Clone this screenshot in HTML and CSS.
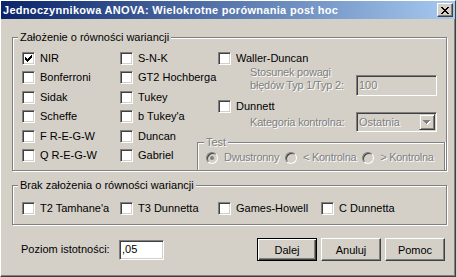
FILE: index.html
```html
<!DOCTYPE html>
<html lang="pl">
<head>
    <meta charset="UTF-8">
    <title>Jednoczynnikowa ANOVA: Wielokrotne porównania post hoc</title>
    <link rel="stylesheet" href="styles.css">
</head>
<body>
    <div class="window">
        <div class="titlebar">
            <span class="title">Jednoczynnikowa ANOVA: Wielokrotne porównania post hoc</span>
            <span class="close">
                <svg width="8" height="7" viewBox="0 0 8 7" shape-rendering="crispEdges"><path fill="#000" d="M0 0h2v1h-2zM6 0h2v1h-2zM1 1h2v1h-2zM5 1h2v1h-2zM2 2h4v1h-4zM3 3h2v1h-2zM2 4h4v1h-4zM1 5h2v1h-2zM5 5h2v1h-2zM0 6h2v1h-2zM6 6h2v1h-2z"/></svg>
            </span>
        </div>

        <div class="content">
            <!-- equal variances assumed -->
            <div class="group group-equal">
                <div class="group-label">Założenie o równości wariancji</div>
                <div class="cols">
                    <div class="checks">
                        <label class="check"><span class="box"><svg width="7" height="7" viewBox="0 0 7 7" shape-rendering="crispEdges"><path fill="#000" d="M6 0h1v1h-1zM5 1h2v1h-2zM0 2h1v1h-1zM4 2h3v1h-3zM0 3h2v1h-2zM3 3h3v1h-3zM0 4h5v1h-5zM1 5h3v1h-3zM2 6h1v1h-1z"/></svg></span>NIR</label>
                        <label class="check"><span class="box"></span>Bonferroni</label>
                        <label class="check"><span class="box"></span>Sidak</label>
                        <label class="check"><span class="box"></span>Scheffe</label>
                        <label class="check"><span class="box"></span>F R-E-G-W</label>
                        <label class="check"><span class="box"></span>Q R-E-G-W</label>
                    </div>
                    <div class="checks">
                        <label class="check"><span class="box"></span>S-N-K</label>
                        <label class="check"><span class="box"></span>GT2 Hochberga</label>
                        <label class="check"><span class="box"></span>Tukey</label>
                        <label class="check"><span class="box"></span>b Tukey'a</label>
                        <label class="check"><span class="box"></span>Duncan</label>
                        <label class="check"><span class="box"></span>Gabriel</label>
                    </div>
                    <div class="col-wide">
                        <label class="check"><span class="box"></span>Waller-Duncan</label>
                        <div class="field-row">
                            <span class="field-label disabled">Stosunek powagi<br>błędów Typ 1/Typ 2:</span>
                            <span class="edit edit-ratio disabled">100</span>
                        </div>
                        <label class="check check-dunnett"><span class="box"></span>Dunnett</label>
                        <div class="field-row field-row-combo">
                            <span class="field-label disabled">Kategoria kontrolna:</span>
                            <span class="combo">
                                <span class="combo-text disabled">Ostatnia</span>
                                <span class="combo-btn">
                                    <svg width="8" height="5" viewBox="0 0 8 5" shape-rendering="crispEdges"><path fill="#fff" d="M1 1h7v1h-7zM2 2h5v1h-5zM3 3h3v1h-3zM4 4h1v1h-1z"/><path fill="#808080" d="M0 0h7v1h-7zM1 1h5v1h-5zM2 2h3v1h-3zM3 3h1v1h-1z"/></svg>
                                </span>
                            </span>
                        </div>
                        <div class="test-box">
                            <div class="group-label disabled">Test</div>
                            <div class="radios">
                                <span class="radio-item disabled"><span class="radio"><span class="dot"></span></span>Dwustronny</span>
                                <span class="radio-item disabled"><span class="radio"></span>&lt; Kontrolna</span>
                                <span class="radio-item disabled"><span class="radio"></span>&gt; Kontrolna</span>
                            </div>
                        </div>
                    </div>
                </div>
            </div>

            <!-- equal variances not assumed -->
            <div class="group group-unequal">
                <div class="group-label">Brak założenia o równości wariancji</div>
                <div class="row-checks">
                    <label class="check"><span class="box"></span>T2 Tamhane'a</label>
                    <label class="check"><span class="box"></span>T3 Dunnetta</label>
                    <label class="check"><span class="box"></span>Games-Howell</label>
                    <label class="check"><span class="box"></span>C Dunnetta</label>
                </div>
            </div>

            <div class="bottom-row">
                <span class="alpha-label">Poziom istotności:</span>
                <span class="edit edit-alpha">,05</span>
                <div class="buttons">
                    <button class="button default">Dalej</button>
                    <button class="button">Anuluj</button>
                    <button class="button">Pomoc</button>
                </div>
            </div>
        </div>
    </div>
</body>
</html>
```
FILE: styles.css
```css
body {
    margin: 0;
    background-color: #d4d0c8;
    font-family: "Liberation Sans", Arial, sans-serif;
    font-size: 11px;
    line-height: 13px;
    color: #000;
}
.window {
    width: 456px;
    height: 277px;
    box-sizing: border-box;
    border-left: 1px solid #fff;
    border-top: 1px solid #fff;
    border-right: 1px solid #404040;
    border-bottom: 1px solid #404040;
    box-shadow: inset -1px -1px #808080;
    background-color: #d4d0c8;
}
.titlebar {
    display: flex;
    align-items: center;
    height: 18px;
    padding: 0 2px;
    background: linear-gradient(to right, #0a246a, #a6caf0);
}
.title {
    flex: 1;
    color: #fff;
    font-weight: bold;
    letter-spacing: .3px;
    white-space: nowrap;
}
.close {
    display: flex;
    align-items: center;
    justify-content: center;
    width: 16px;
    height: 14px;
    box-sizing: border-box;
    border: 1px solid;
    border-color: #fff #404040 #404040 #fff;
    box-shadow: inset -1px -1px #808080;
    background-color: #d4d0c8;
}
.content {
    padding: 18px 0 0 11px;
}

/* group boxes */
.group {
    width: 435px;
    box-sizing: border-box;
    border: 1px solid #808080;
    box-shadow: 1px 1px #fff, inset 1px 1px #fff;
}
.group-label {
    width: fit-content;
    margin: -7px 0 0 5px;
    padding: 0 2px;
    background-color: #d4d0c8;
    white-space: nowrap;
}
.cols {
    display: flex;
    margin-top: 8px;
    padding-left: 9px;
}
.checks {
    display: flex;
    flex-direction: column;
    gap: 6.4px;
    width: 98px;
}
.col-wide {
    flex: 1;
}
.check {
    display: flex;
    align-items: center;
    gap: 5px;
    height: 13px;
    white-space: nowrap;
}
.box {
    display: flex;
    align-items: center;
    justify-content: center;
    flex: none;
    width: 13px;
    height: 13px;
    box-sizing: border-box;
    border: 1px solid;
    border-color: #808080 #fff #fff #808080;
    box-shadow: inset 1px 1px #404040, inset -1px -1px #d4d0c8;
    background-color: #fff;
}
.disabled {
    color: #808080;
    text-shadow: 1px 1px #fff;
}
.field-row {
    display: flex;
    margin-top: 1px;
    padding-left: 32px;
}
.field-label {
    width: 106px;
    white-space: nowrap;
    letter-spacing: -.2px;
}
.edit {
    display: flex;
    align-items: center;
    box-sizing: border-box;
    border: 1px solid;
    border-color: #808080 #fff #fff #808080;
    box-shadow: inset 1px 1px #404040, inset -1px -1px #d4d0c8;
    background-color: #fff;
    padding: 0 2px;
}
.edit-ratio {
    width: 81px;
    height: 21px;
    margin-top: 9px;
    background-color: #d4d0c8;
}
.check-dunnett {
    margin-top: 4px;
}
.field-row-combo {
    align-items: center;
    margin-top: -1px;
}
.combo {
    display: flex;
    align-items: center;
    width: 81px;
    height: 20px;
    box-sizing: border-box;
    border: 1px solid;
    border-color: #808080 #fff #fff #808080;
    box-shadow: inset 1px 1px #404040, inset -1px -1px #d4d0c8;
    background-color: #d4d0c8;
}
.combo-text {
    flex: 1;
    padding-left: 2px;
}
.combo-btn {
    display: flex;
    align-items: center;
    justify-content: center;
    width: 16px;
    height: 16px;
    margin-right: 1px;
    box-sizing: border-box;
    border: 1px solid;
    border-color: #d4d0c8 #404040 #404040 #d4d0c8;
    box-shadow: inset 1px 1px #fff, inset -1px -1px #808080;
}
.test-box {
    margin: 10px 1px 0 -21px;
    padding-bottom: 6px;
    border: 1px solid #808080;
    border-bottom: none;
    box-shadow: inset 1px 1px #fff, 1px 0 #fff;
}
.test-box .group-label {
    margin-left: 6px;
}
.radios {
    display: flex;
    gap: 6px;
    margin-top: 2px;
    padding-left: 8px;
}
.radio-item {
    display: flex;
    align-items: center;
    gap: 6px;
    height: 13px;
    white-space: nowrap;
    letter-spacing: -.3px;
}
.radio {
    display: flex;
    align-items: center;
    justify-content: center;
    width: 12px;
    height: 12px;
    box-sizing: border-box;
    border: 1px solid;
    border-color: #808080 #fff #fff #808080;
    border-radius: 50%;
    box-shadow: inset 1px 1px #404040, inset -1px -1px #d4d0c8;
    background-color: #d4d0c8;
}
.dot {
    width: 4px;
    height: 4px;
    border-radius: 50%;
    background-color: #808080;
}

.group-unequal {
    margin-top: 14px;
    padding-bottom: 9px;
}
.row-checks {
    display: grid;
    grid-template-columns: 98px 98px 103px auto;
    margin-top: 10px;
    padding-left: 9px;
}

/* bottom row */
.bottom-row {
    display: flex;
    align-items: center;
    height: 23px;
    margin-top: 13px;
    padding: 0 10px 0 9px;
}
.alpha-label {
    width: 98px;
}
.edit-alpha {
    width: 45px;
    height: 20px;
}
.buttons {
    display: flex;
    gap: 4px;
    margin-left: auto;
}
.button {
    width: 60px;
    height: 23px;
    padding: 0;
    font-family: inherit;
    font-size: 11px;
    color: #000;
    background-color: #d4d0c8;
    border: 1px solid;
    border-color: #fff #404040 #404040 #fff;
    box-shadow: inset -1px -1px #808080;
}
.button.default {
    border-color: #000;
    box-shadow: inset 1px 1px #fff, inset -1px -1px #404040, inset -2px -2px #808080;
}
```
